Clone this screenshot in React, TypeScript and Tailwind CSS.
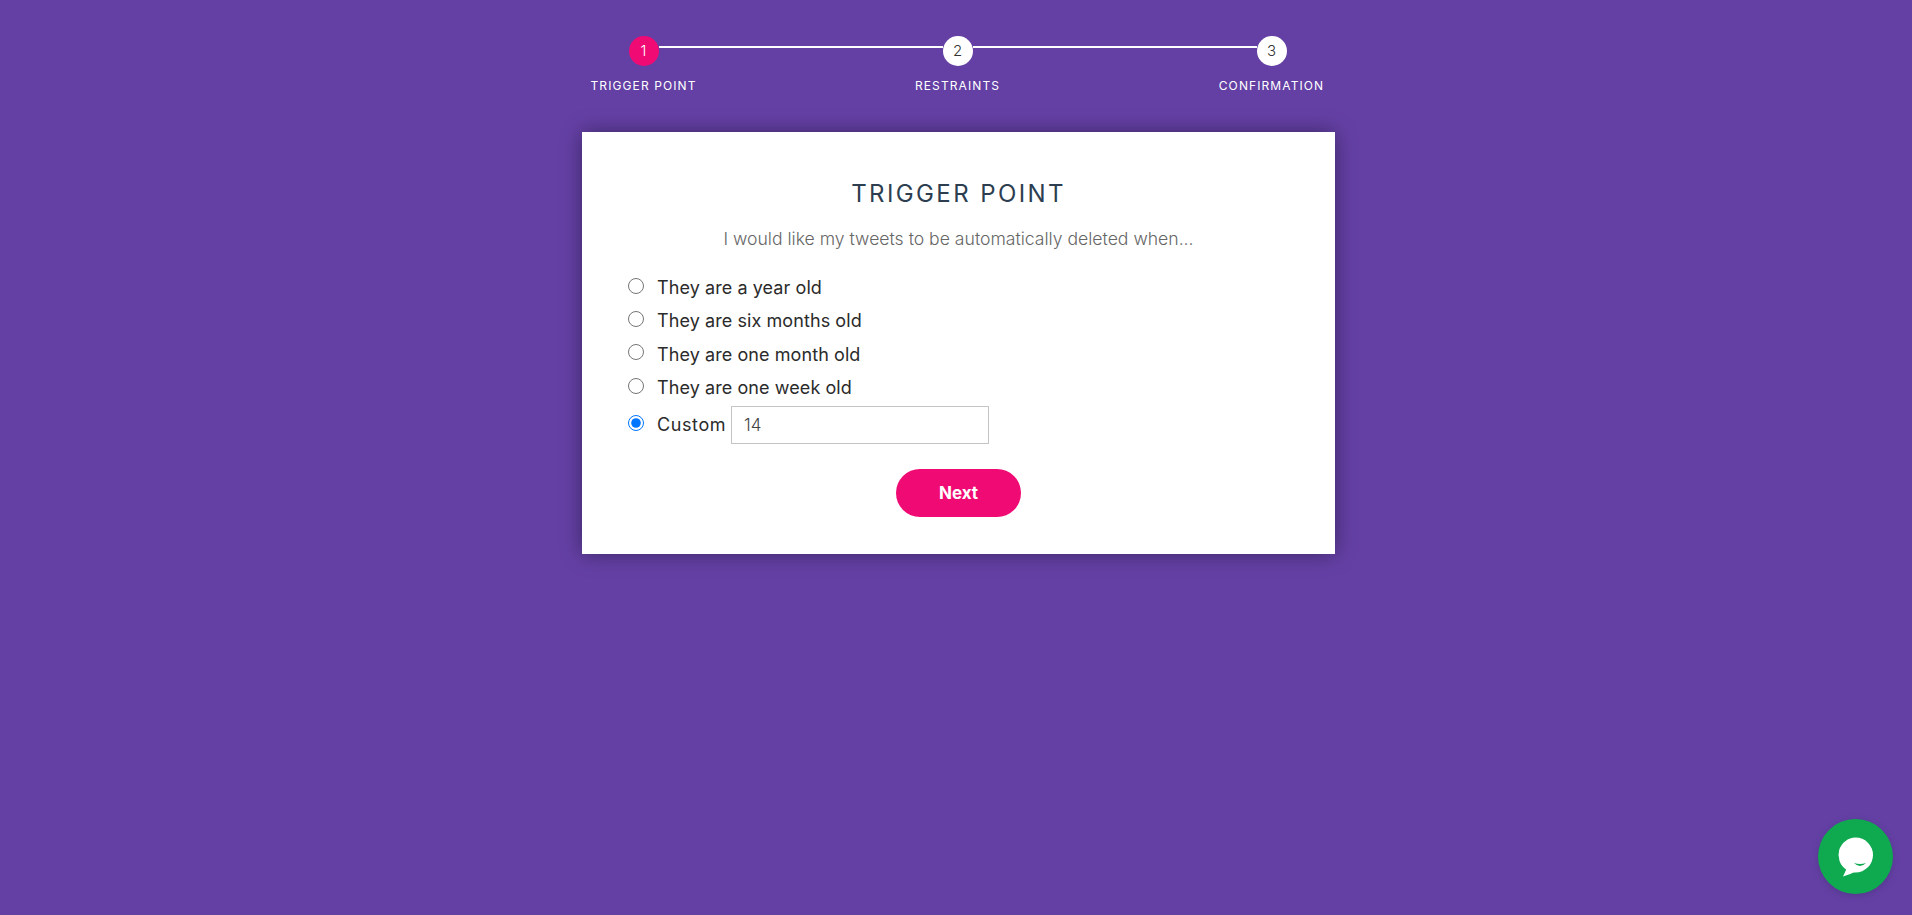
export default function App() {
  const options = ["They are a year old", "They are six months old", "They are one month old", "They are one week old"];
  const steps = ["TRIGGER POINT", "RESTRAINTS", "CONFIRMATION"];
  return (
    <div className="relative h-[915px] overflow-hidden bg-[#6440a5] pl-[5px] pt-[36px] font-['Inter',sans-serif]">
      <div className="pr-[2px]">
        <div className="mx-auto flex w-[658px] text-[15px] font-light text-[#333]">
          <div className="flex h-[30px] w-[30px] shrink-0 items-center justify-center rounded-full bg-[#f00a74] text-white">1</div>
          <div className="mt-[10px] h-[2px] flex-1 bg-white"></div>
          <div className="flex h-[30px] w-[30px] shrink-0 items-center justify-center rounded-full bg-white">2</div>
          <div className="mt-[10px] h-[2px] flex-1 bg-white"></div>
          <div className="flex h-[30px] w-[30px] shrink-0 items-center justify-center rounded-full bg-white">3</div>
        </div>
        <div className="mx-auto mt-[12px] flex w-[828px] justify-between">
          {steps.map((s) => (
            <div key={s} className="w-[200px] text-center text-[12px] leading-4 tracking-[1.1px] text-white">{s}</div>
          ))}
        </div>
      </div>
      <div className="mx-auto mt-[38px] h-[422px] w-[753px] bg-white pl-[46px] pr-[46px] pt-[46px] shadow-[0_0_20px_rgba(0,0,0,0.4)]">
        <h1 className="text-center text-[24px] font-normal leading-8 tracking-[2.4px] text-[#2c3e50]">TRIGGER POINT</h1>
        <p className="mt-[17px] text-center text-[17.6px] font-light leading-6 text-[#666]">I would like my tweets to be automatically deleted when...</p>
        <div className="mt-[18px]">
          {options.map((o) => (
            <label key={o} className="flex h-[33.3px] items-center gap-[13px] text-[18px] tracking-[0.08px] text-[#2b2b2b]">
              <input type="radio" name="trigger" className="m-0 h-4 w-4" />
              <span className="relative top-[2px]">{o}</span>
            </label>
          ))}
          <label className="mt-[4px] flex h-[38px] items-center text-[18px] tracking-[0.6px] text-[#2b2b2b]">
            <input type="radio" name="trigger" defaultChecked className="m-0 mb-[5px] mr-[13px] h-4 w-4" />
            <span className="relative top-[-1px] w-[74px]">Custom</span>
            <input type="text" defaultValue="14" className="h-[38px] w-[258px] border border-[#c4c4c4] px-[12px] text-[17px] font-light tracking-normal text-[#444] outline-none" />
          </label>
        </div>
        <div className="mt-[25px] flex justify-center">
          <button className="h-[48px] w-[125px] rounded-full bg-[#f00a74] pt-[1px] text-[17px] font-bold text-white">Next</button>
        </div>
      </div>
      <div className="absolute left-[1818px] top-[819px] h-[75px] w-[75px] rounded-full bg-[#0fa94f] shadow-[0_2px_8px_rgba(0,0,0,0.15)]">
        <svg viewBox="0 0 75 75" className="h-[75px] w-[75px]">
          <path d="M37.5 18.5a17.5 17.5 0 0 1 0 35c-1.6 0-3 .2-4.5 1.2L25 57.5l3.2-7A17.5 17.5 0 0 1 37.5 18.5z" fill="#fff" />
          <path d="M36 44q6 6 12 0q-6 1.8-12 0z" fill="#0fa94f" />
        </svg>
      </div>
    </div>
  );
}
